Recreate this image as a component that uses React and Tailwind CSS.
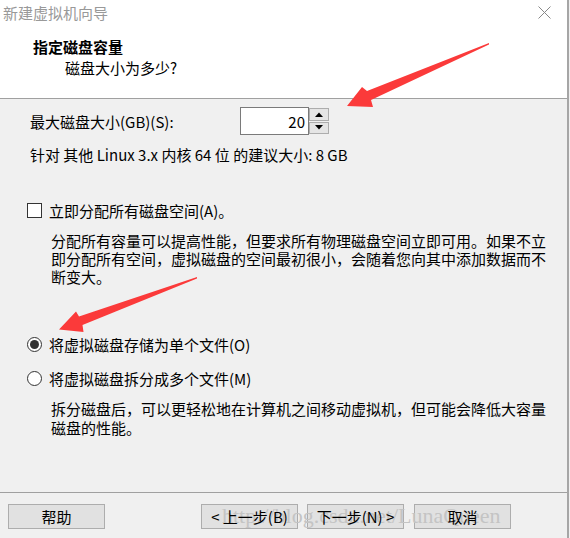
import React from "react";

const F = "font-['Noto_Sans_CJK_SC','Noto_Sans',sans-serif]";

function Btn({ children, className = "" }) {
  return (
    <div
      className={`h-[25px] w-[97px] flex items-center justify-center border border-[#adadad] bg-[#e1e1e1] text-[15px] leading-[19px] text-black ${className}`}
    >
      <span className="relative z-10">{children}</span>
    </div>
  );
}

function Radio({ checked }) {
  return (
    <div className="w-[15px] h-[15px] rounded-full border border-[#333] bg-white flex items-center justify-center">
      {checked && <div className="w-[9px] h-[9px] rounded-full bg-[#333]" />}
    </div>
  );
}

export default function App() {
  return (
    <div className={`relative w-[570px] h-[538px] overflow-hidden bg-[#f0f0f0] flex ${F}`}>
      <div className="w-[567px] flex flex-col">
        {/* header */}
        <div className="h-[98px] bg-white flex flex-col">
          <div className="h-[25px] flex items-center justify-between pl-[3px] pr-[16px]">
            <span className="text-[15px] leading-[19px] text-[#999]">新建虚拟机向导</span>
            <svg width="13" height="13" viewBox="0 0 13 13">
              <path d="M0.5 0.5 L12.5 12.5 M12.5 0.5 L0.5 12.5" stroke="#888" strokeWidth="1" />
            </svg>
          </div>
          <div className="mt-[12px] pl-[33px] text-[15px] leading-[19px] font-bold text-black">指定磁盘容量</div>
          <div className="mt-[2px] pl-[65px] text-[15px] leading-[19px] text-black">磁盘大小为多少?</div>
        </div>
        <div className="h-px bg-[#a0a0a0]" />

        {/* body */}
        <div className="flex-1 flex flex-col text-[15px] leading-[19px] text-black">
          <div className="mt-[8px] h-[28px] flex items-center">
            <div className="w-[240px] pl-[30px]">最大磁盘大小(GB)(S):</div>
            <div className="h-[28px] w-[69px] border border-[#7a7a7a] bg-white flex items-center justify-end pr-[3px]">20</div>
            <div className="h-[28px] w-[20px] flex flex-col gap-[1px] py-[1px]">
              <div className="flex-1 border border-[#adadad] bg-[#e5e5e5] flex items-center justify-center">
                <svg width="8" height="5" viewBox="0 0 8 5"><path d="M0 5 L4 0.5 L8 5 Z" fill="#000" /></svg>
              </div>
              <div className="flex-1 border border-[#adadad] bg-[#e5e5e5] flex items-center justify-center">
                <svg width="8" height="5" viewBox="0 0 8 5"><path d="M0 0 L4 4.5 L8 0 Z" fill="#000" /></svg>
              </div>
            </div>
          </div>
          <div className="mt-[10px] pl-[30px]">针对 其他 Linux 3.x 内核 64 位 的建议大小: 8 GB</div>

          <div className="mt-[37px] flex items-center pl-[27px] gap-[7px]">
            <div className="w-[15px] h-[15px] border border-[#333] bg-white" />
            <span>立即分配所有磁盘空间(A)。</span>
          </div>
          <div className="mt-[12px] pl-[51px] leading-[18px]">
            <div>分配所有容量可以提高性能，但要求所有物理磁盘空间立即可用。如果不立</div>
            <div>即分配所有空间，虚拟磁盘的空间最初很小，会随着您向其中添加数据而不</div>
            <div>断变大。</div>
          </div>

          <div className="mt-[49px] flex items-center pl-[27px] gap-[7px]">
            <Radio checked />
            <span>将虚拟磁盘存储为单个文件(O)</span>
          </div>
          <div className="mt-[15px] flex items-center pl-[27px] gap-[7px]">
            <Radio />
            <span>将虚拟磁盘拆分成多个文件(M)</span>
          </div>
          <div className="mt-[11px] pl-[51px] leading-[19px]">
            <div>拆分磁盘后，可以更轻松地在计算机之间移动虚拟机，但可能会降低大容量</div>
            <div>磁盘的性能。</div>
          </div>
        </div>

        {/* footer */}
        <div className="h-px bg-[#a0a0a0]" />
        <div className="h-[45px] flex items-start pt-[11px] pl-[8px]">
          <Btn>帮助</Btn>
          <Btn className="ml-[96px]">&lt; 上一步(B)</Btn>
          <Btn className="ml-[9px]">下一步(N) &gt;</Btn>
          <Btn className="ml-[10px]">取消</Btn>
        </div>
      </div>
      <div className="w-[2px] bg-[#a6a6a6]" />
      <div className="w-[1px] bg-[#f0f0f0]" />

      {/* watermark */}
      <div className="absolute left-[222px] top-[503px] font-['Liberation_Serif',serif] text-[22px] leading-[26px] text-[#c4c4c4] pointer-events-none whitespace-nowrap">
        http://blog.csdn.net/LunaQueen
      </div>

      {/* annotation arrows */}
      <svg className="absolute left-0 top-0 pointer-events-none" width="570" height="538" viewBox="0 0 570 538">
        <polygon points="489,43 367,91 362,87 347,106 373,107 371,100 489,44.5" fill="#fb3a3a" />
        <polygon points="197,277 79,316.5 76,311.5 59,329.5 83.5,332 82.5,325 197,278.5" fill="#fb3a3a" />
      </svg>
    </div>
  );
}
